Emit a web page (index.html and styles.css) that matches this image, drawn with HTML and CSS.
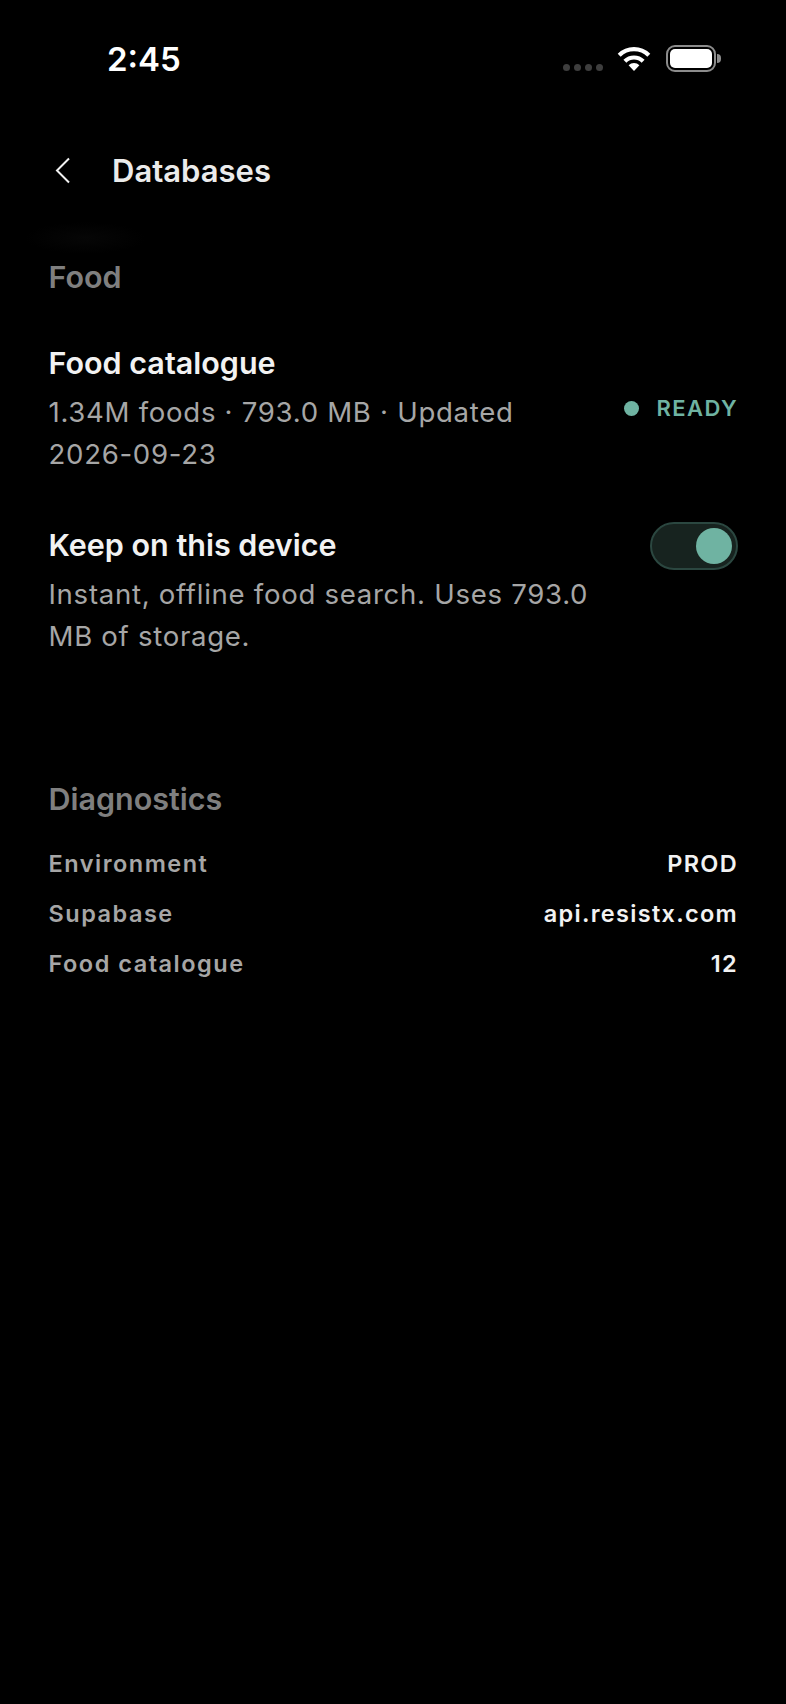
FILE: index.html
```html
<html lang="en"><head>
  <meta charset="UTF-8">
  <meta name="viewport" content="width=device-width, initial-scale=1.0">
  <title>Databases</title>
  <link rel="stylesheet" href="styles.css">
</head>
<body>
  <div class="status-bar">
    <div class="time">2:45</div>
    <div class="status-icons">
      <div class="signal"><i></i><i></i><i></i><i></i></div>
      <svg class="wifi" width="34" height="25" viewBox="0 0 34 25">
        <path d="M17 25 L11.6 19.2 A8 8 0 0 1 22.4 19.2 Z" fill="#fff"/>
        <path d="M7.9 15.2 A13 13 0 0 1 26.1 15.2" fill="none" stroke="#fff" stroke-width="4.2"/>
        <path d="M2.2 9.2 A21 21 0 0 1 31.8 9.2" fill="none" stroke="#fff" stroke-width="4.2"/>
      </svg>
      <div class="battery"><div class="battery-fill"></div></div>
      <div class="battery-cap"></div>
    </div>
  </div>

  <div class="header">
    <svg class="back" width="16" height="27" viewBox="0 0 16 27">
      <path d="M14 1.5 L2 13.5 L14 25.5" fill="none" stroke="#f2f2f2" stroke-width="2"/>
    </svg>
    <div class="page-title">Databases</div>
  </div>

  <div class="content">
    <div class="section-title">Food</div>

    <div class="row">
      <div class="row-text">
        <div class="row-title">Food catalogue</div>
        <div class="row-sub">1.34M foods · 793.0 MB · Updated 2026-09-23</div>
      </div>
      <div class="ready"><span class="dot"></span>READY</div>
    </div>

    <div class="row row-device">
      <div class="row-text">
        <div class="row-title">Keep on this device</div>
        <div class="row-sub">Instant, offline food search. Uses 793.0 MB of storage.</div>
      </div>
      <div class="toggle"><div class="knob"></div></div>
    </div>

    <div class="section-title diagnostics">Diagnostics</div>
    <div class="diag-row"><span>Environment</span><b>PROD</b></div>
    <div class="diag-row"><span>Supabase</span><b>api.resistx.com</b></div>
    <div class="diag-row"><span>Food catalogue</span><b>12</b></div>
  </div>
</body></html>
```

FILE: styles.css
```css
html, body {
  margin: 0;
  background: #000;
}

body {
  width: 786px;
  height: 1704px;
  overflow: hidden;
  font-family: "Inter", "Liberation Sans", sans-serif;
  color: #fff;
}

.status-bar {
  display: flex;
  justify-content: space-between;
  height: 118px;
  padding: 40px 65px 0 107px;
  box-sizing: border-box;
}

.time {
  font-size: 33px;
  line-height: 38px;
  font-weight: 600;
  color: #fff;
}

.status-icons {
  display: flex;
  align-items: flex-start;
  padding-top: 5px;
}

.signal {
  display: flex;
  gap: 4px;
  margin: 19px 14px 0 0;
}

.signal i {
  display: block;
  width: 7px;
  height: 7px;
  border-radius: 50%;
  background: #3e3e3e;
}

.wifi {
  margin: 1px 15px 0 0;
}

.battery {
  width: 50px;
  height: 27px;
  border: 2.5px solid #8c8c8c;
  border-radius: 9px;
  box-sizing: border-box;
  padding: 2px;
}

.battery-fill {
  height: 100%;
  background: #fff;
  border-radius: 5px;
}

.battery-cap {
  width: 4px;
  height: 9px;
  margin: 9px 0 0 1px;
  background: #8c8c8c;
  border-radius: 0 4px 4px 0;
}

.header {
  display: flex;
  align-items: center;
  height: 104px;
  padding-left: 55px;
}

.back {
  margin-right: 41px;
}

.page-title {
  font-size: 31px;
  font-weight: 600;
  color: #ebebeb;
}

.content {
  padding: 37px 48px 0 48.5px;
  background: radial-gradient(ellipse 60px 16px at 85px 16px, #060606, #000) no-repeat;
}

.section-title {
  font-size: 30.5px;
  line-height: 36px;
  font-weight: 600;
  color: #7f7f7f;
}

.row {
  display: flex;
  justify-content: space-between;
  align-items: flex-start;
  margin-top: 50px;
}

.row-text {
  width: 545px;
}

.row-title {
  font-size: 30.5px;
  line-height: 36px;
  font-weight: 600;
  color: #f2f2f2;
}

.row-sub {
  margin-top: 10px;
  font-size: 27.6px;
  line-height: 42px;
  letter-spacing: 0.7px;
  color: #a6a6a6;
}

.ready {
  display: flex;
  align-items: center;
  margin-top: 48px;
  font-size: 22px;
  line-height: 30px;
  font-weight: 600;
  letter-spacing: 1.4px;
  color: #6fb3a2;
}

.dot {
  width: 15px;
  height: 15px;
  margin-right: 18px;
  border-radius: 50%;
  background: #6fb3a2;
}

.row-device {
  margin-top: 52px;
}

.toggle {
  display: flex;
  justify-content: flex-end;
  align-items: center;
  width: 88px;
  height: 48px;
  margin-top: -5px;
  padding-right: 4px;
  box-sizing: border-box;
  border: 2px solid #2b4740;
  border-radius: 24px;
  background: #17231f;
}

.knob {
  width: 36px;
  height: 36px;
  border-radius: 50%;
  background: #6fb3a2;
}

.diagnostics {
  margin-top: 124px;
  margin-bottom: 22px;
}

.diag-row {
  display: flex;
  justify-content: space-between;
  height: 50px;
  font-size: 23.5px;
  line-height: 50px;
  letter-spacing: 1.5px;
  font-weight: 600;
  color: #a6a6a6;
}

.diag-row b {
  font-weight: 600;
  letter-spacing: 1.3px;
  color: #f2f2f2;
}
```
